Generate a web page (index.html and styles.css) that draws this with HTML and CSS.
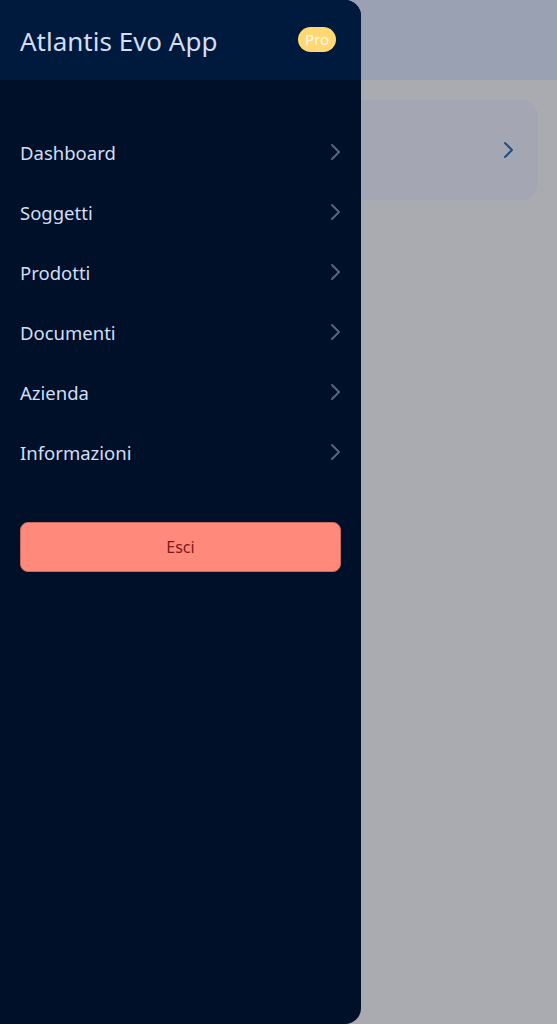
FILE: index.html
```html
<!DOCTYPE html>
<html lang="it">
<head>
<meta charset="utf-8">
<title>Atlantis Evo App</title>
<link rel="stylesheet" href="styles.css">
</head>
<body>

<!-- page under the drawer -->
<div class="page">
	<div class="page-bar"></div>
	<div class="page-body">
		<div class="card">
			<svg class="card-arrow" width="12" height="18" viewBox="0 0 12 18"><path d="M3 2l7 7-7 7" fill="none" stroke="currentColor" stroke-width="2" stroke-linecap="round" stroke-linejoin="round"/></svg>
		</div>
	</div>
</div>

<!-- side menu -->
<nav class="drawer">
	<div class="drawer-head">
		<span class="app-title">Atlantis Evo App</span>
		<span class="badge">Pro</span>
	</div>
	<ul class="menu">
		<li class="menu-item"><span>Dashboard</span><svg class="chev" width="12" height="18" viewBox="0 0 12 18"><path d="M3 2l7 7-7 7"/></svg></li>
		<li class="menu-item"><span>Soggetti</span><svg class="chev" width="12" height="18" viewBox="0 0 12 18"><path d="M3 2l7 7-7 7"/></svg></li>
		<li class="menu-item"><span>Prodotti</span><svg class="chev" width="12" height="18" viewBox="0 0 12 18"><path d="M3 2l7 7-7 7"/></svg></li>
		<li class="menu-item"><span>Documenti</span><svg class="chev" width="12" height="18" viewBox="0 0 12 18"><path d="M3 2l7 7-7 7"/></svg></li>
		<li class="menu-item"><span>Azienda</span><svg class="chev" width="12" height="18" viewBox="0 0 12 18"><path d="M3 2l7 7-7 7"/></svg></li>
		<li class="menu-item"><span>Informazioni</span><svg class="chev" width="12" height="18" viewBox="0 0 12 18"><path d="M3 2l7 7-7 7"/></svg></li>
	</ul>
	<div class="logout">
		<button class="btn-exit">Esci</button>
	</div>
</nav>

</body>
</html>
```

FILE: styles.css
```css
html, body {
	margin: 0;
	padding: 0;
	height: 100%;
}
body {
	font-family: "Noto Sans", "Open Sans", sans-serif;
	background: #aaabb0;
	position: relative;
	overflow: hidden;
}

/* dimmed page behind the drawer */
.page {
	height: 100%;
	display: flex;
	flex-direction: column;
}
.page-bar {
	height: 80px;
	background: #99a1b3;
}
.page-body {
	padding: 20px 19px 0 20px;
}
.card {
	height: 100px;
	border-radius: 16px;
	background: #a4a6b3;
	display: flex;
	align-items: center;
	justify-content: flex-end;
	padding-right: 24px;
}
.card-arrow {
	color: #1d4f80;
}

/* drawer */
.drawer {
	position: absolute;
	top: 0;
	left: 0;
	bottom: 0;
	width: 361px;
	background: #001029;
	border-radius: 0 16px 16px 0;
	overflow: hidden;
	display: flex;
	flex-direction: column;
}
.drawer-head {
	height: 80px;
	background: #001a3e;
	display: flex;
	align-items: center;
	justify-content: space-between;
	padding: 0 25px 0 20px;
	box-sizing: border-box;
	flex-shrink: 0;
}
.app-title {
	color: #d3def5;
	font-size: 26px;
	margin-top: 2px;
}
.badge {
	background: #ffd873;
	color: #fff8e4;
	font-size: 15px;
	line-height: 25px;
	padding: 0 7px;
	border-radius: 13px;
	margin-top: -2px;
}

.menu {
	list-style: none;
	margin: 0;
	padding: 42px 0 0 0;
}
.menu-item {
	height: 60px;
	display: flex;
	align-items: center;
	justify-content: space-between;
	padding: 0 20px 0 20px;
	color: #d3def5;
	font-size: 18.5px;
}
.chev path {
	fill: none;
	stroke: #5b6578;
	stroke-width: 2;
	stroke-linecap: round;
	stroke-linejoin: round;
}

.logout {
	padding: 40px 20px 0 20px;
}
.btn-exit {
	width: 100%;
	height: 50px;
	border: 1px solid #c86a5f;
	border-radius: 8px;
	background: #ff8a7b;
	color: #7c1a1a;
	font-family: inherit;
	font-size: 16px;
	cursor: pointer;
}
```
